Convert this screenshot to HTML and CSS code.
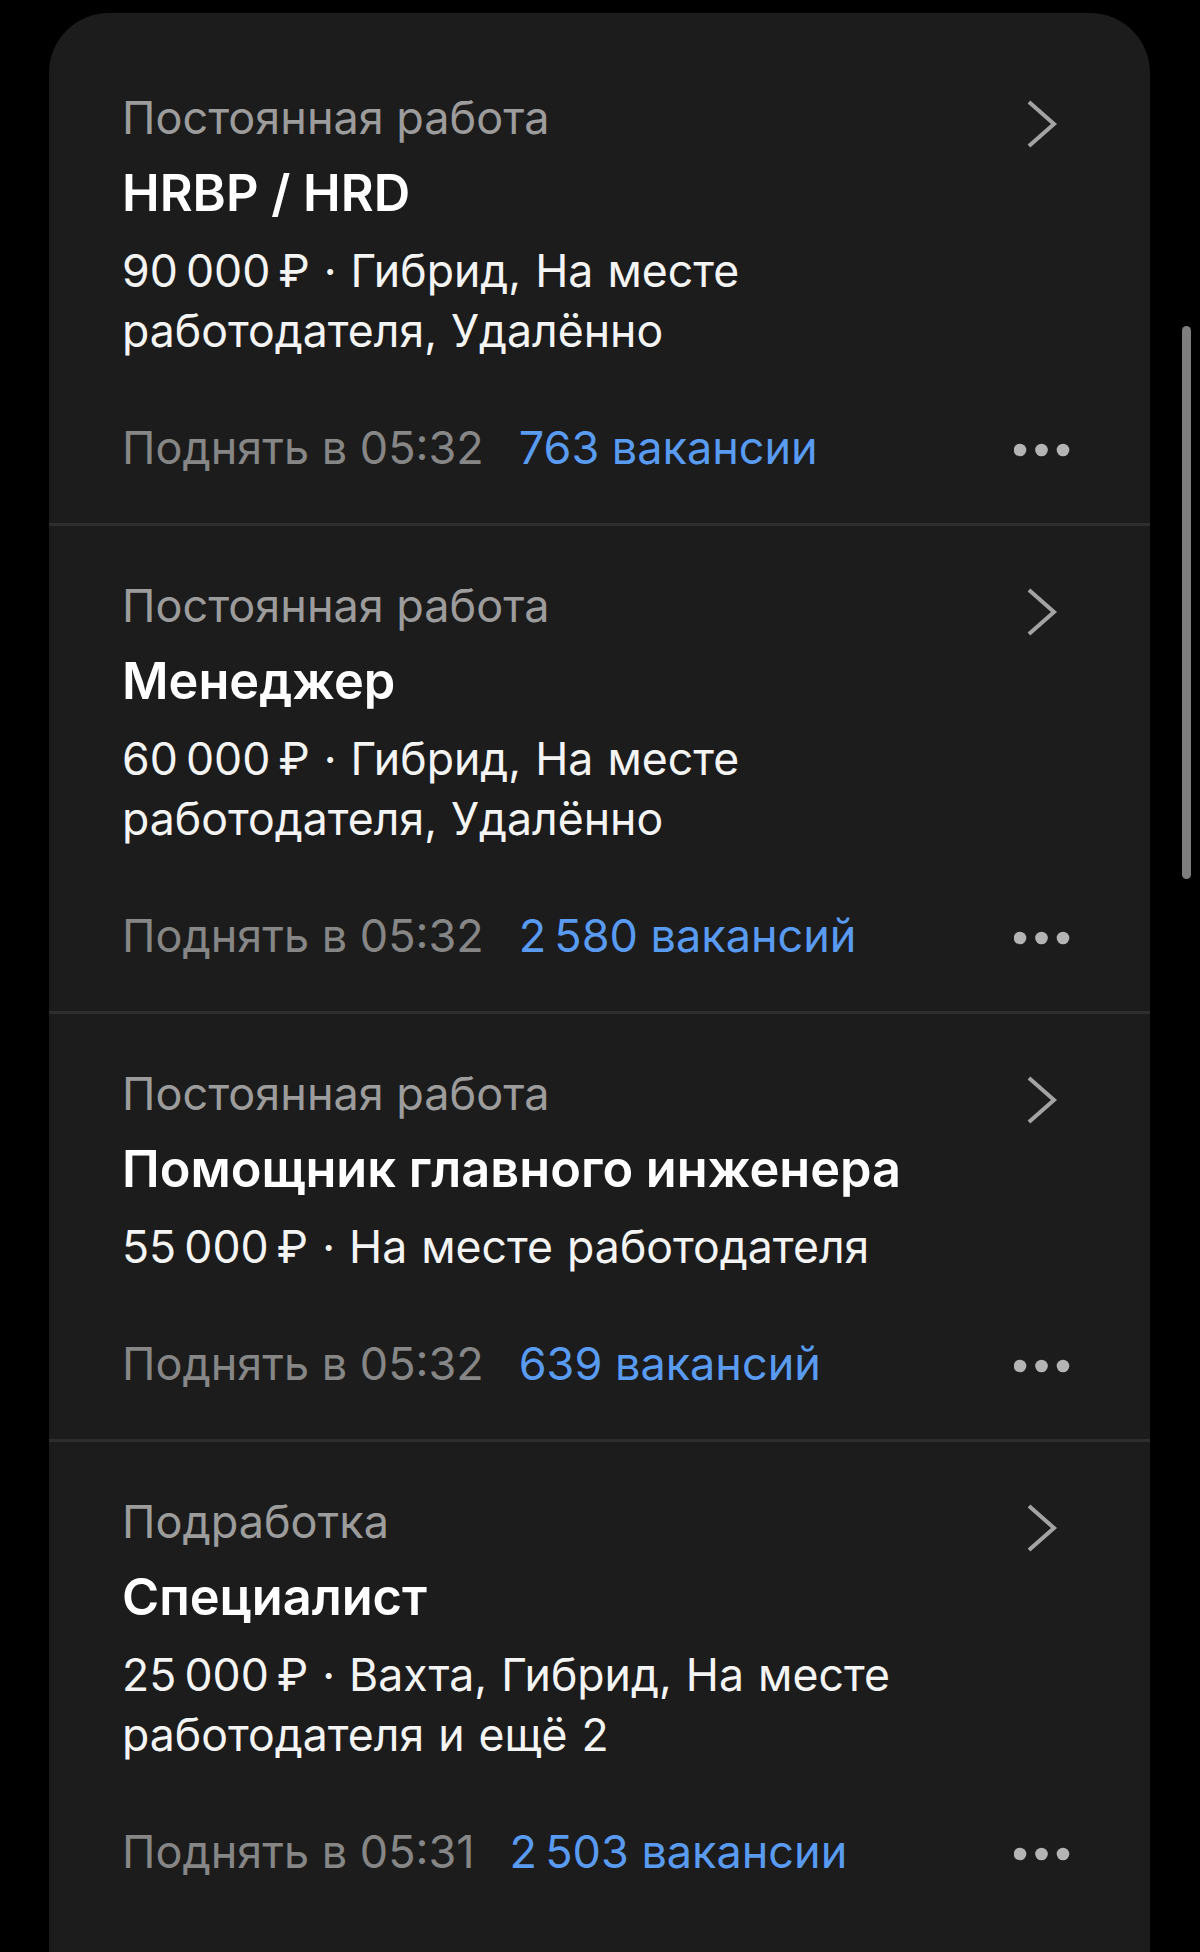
FILE: index.html
```html
<!DOCTYPE html>
<html lang="ru">
<head>
<meta charset="utf-8">
<title>Мои резюме</title>
<link rel="stylesheet" href="styles.css">
</head>
<body>
<main class="card">
  <article class="resume">
    <div class="resume-head">
      <div class="resume-type">Постоянная работа</div>
      <h2 class="resume-title">HRBP / HRD</h2>
      <p class="resume-desc">90&#8239;000&#8239;₽ · Гибрид, На месте работодателя, Удалённо</p>
    </div>
    <svg class="chevron" viewBox="0 0 32 50" width="32" height="50"><path d="M3 3 L28 25 L3 47" /></svg>
    <div class="resume-foot">
      <span class="raise">Поднять в 05:32</span>
      <a class="vacancies">763 вакансии</a>
    </div>
    <svg class="more" viewBox="0 0 56 14" width="56" height="14"><circle cx="6" cy="7" r="6.3"/><circle cx="27.5" cy="7" r="6.3"/><circle cx="49" cy="7" r="6.3"/></svg>
  </article>

  <article class="resume">
    <div class="resume-head">
      <div class="resume-type">Постоянная работа</div>
      <h2 class="resume-title">Менеджер</h2>
      <p class="resume-desc">60&#8239;000&#8239;₽ · Гибрид, На месте работодателя, Удалённо</p>
    </div>
    <svg class="chevron" viewBox="0 0 32 50" width="32" height="50"><path d="M3 3 L28 25 L3 47" /></svg>
    <div class="resume-foot">
      <span class="raise">Поднять в 05:32</span>
      <a class="vacancies">2&#8239;580 вакансий</a>
    </div>
    <svg class="more" viewBox="0 0 56 14" width="56" height="14"><circle cx="6" cy="7" r="6.3"/><circle cx="27.5" cy="7" r="6.3"/><circle cx="49" cy="7" r="6.3"/></svg>
  </article>

  <article class="resume">
    <div class="resume-head">
      <div class="resume-type">Постоянная работа</div>
      <h2 class="resume-title">Помощник главного инженера</h2>
      <p class="resume-desc">55&#8239;000&#8239;₽ · На месте работодателя</p>
    </div>
    <svg class="chevron" viewBox="0 0 32 50" width="32" height="50"><path d="M3 3 L28 25 L3 47" /></svg>
    <div class="resume-foot">
      <span class="raise">Поднять в 05:32</span>
      <a class="vacancies">639 вакансий</a>
    </div>
    <svg class="more" viewBox="0 0 56 14" width="56" height="14"><circle cx="6" cy="7" r="6.3"/><circle cx="27.5" cy="7" r="6.3"/><circle cx="49" cy="7" r="6.3"/></svg>
  </article>

  <article class="resume">
    <div class="resume-head">
      <div class="resume-type">Подработка</div>
      <h2 class="resume-title">Специалист</h2>
      <p class="resume-desc">25&#8239;000&#8239;₽ · Вахта, Гибрид, На месте работодателя и ещё 2</p>
    </div>
    <svg class="chevron" viewBox="0 0 32 50" width="32" height="50"><path d="M3 3 L28 25 L3 47" /></svg>
    <div class="resume-foot">
      <span class="raise">Поднять в 05:31</span>
      <a class="vacancies">2&#8239;503 вакансии</a>
    </div>
    <svg class="more" viewBox="0 0 56 14" width="56" height="14"><circle cx="6" cy="7" r="6.3"/><circle cx="27.5" cy="7" r="6.3"/><circle cx="49" cy="7" r="6.3"/></svg>
  </article>
</main>
<div class="scrollbar"></div>
</body>
</html>
```
FILE: styles.css
```css
html, body {
  margin: 0;
  padding: 0;
  background: #000;
}
body {
  font-family: "Inter", "Noto Sans", sans-serif;
  color: #fff;
  overflow: hidden;
  height: 1952px;
}
.card {
  margin: 13px 50px 0 49px;
  padding-top: 22px;
  padding-bottom: 120px;
  background: #1c1c1c;
  border-radius: 60px 60px 0 0;
}
.resume {
  display: grid;
  grid-template-columns: 1fr 56px;
  padding: 52px 80px 47px 73px;
  border-top: 3px solid transparent;
}
.resume + .resume {
  border-top-color: #2e2e2e;
}
.resume-head {
  grid-column: 1;
  grid-row: 1;
  min-width: 0;
}
.resume-type {
  font-size: 45px;
  line-height: 56px;
  color: #9c9c9c;
}
.resume-title {
  margin: 15px 0 0;
  font-size: 50.5px;
  line-height: 64px;
  font-weight: 600;
  color: #fff;
}
.resume-desc {
  margin: 16px 0 0;
  max-width: 860px;
  font-size: 44.6px;
  line-height: 60px;
  word-spacing: 1.5px;
  color: #f4f4f4;
}
.chevron {
  grid-column: 2;
  grid-row: 1;
  justify-self: center;
  margin-top: 9px;
  fill: none;
  stroke: #a3a3a3;
  stroke-width: 4;
  stroke-linejoin: miter;
}
.resume-foot {
  grid-column: 1;
  grid-row: 2;
  display: flex;
  gap: 35px;
  margin-top: 59px;
  font-size: 45px;
  line-height: 56px;
}
.raise {
  color: #868686;
}
.vacancies {
  color: #5a9bf2;
}
.more {
  grid-column: 2;
  grid-row: 2;
  align-self: center;
  justify-self: center;
  margin-top: 63px;
  fill: #b4b4b4;
}
.scrollbar {
  position: fixed;
  left: 1182px;
  top: 326px;
  width: 9px;
  height: 553px;
  border-radius: 5px;
  background: #7e7e7e;
}
```
